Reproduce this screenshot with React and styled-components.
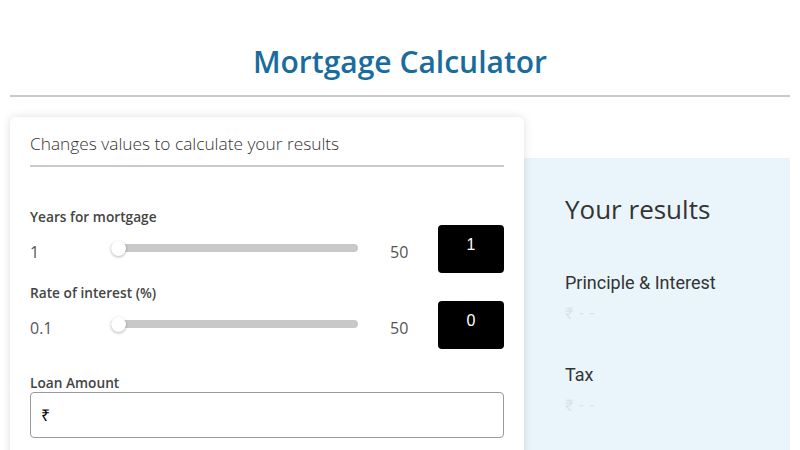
import React, { useState } from 'react';
import styled, { createGlobalStyle } from 'styled-components';

const GlobalStyle = createGlobalStyle`
body {
  margin: 0;
  background: #fff;
  font-family: "Open Sans", "Liberation Sans", sans-serif;
  overflow: hidden;
}
`

const Page = styled.div`
padding: 0 10px;
`
const Header = styled.div`
padding: 42px 0 13px;
border-bottom: 2px solid #cacaca;
text-align: center;
`
const Title = styled.h1`
margin: 0;
font-size: 30px;
line-height: 40px;
font-weight: 600;
color: #1a6c9c;
`
const Body = styled.div`
display: flex;
align-items: flex-start;
margin-top: 20px;
`
const Card = styled.div`
width: 514px;
box-sizing: border-box;
padding: 15px 20px 40px;
border-radius: 6px;
background: #fff;
box-shadow: 0 0 10px rgba(0, 0, 0, 0.13);
position: relative;
z-index: 1;
`
const Subtitle = styled.div`
font-size: 17.3px;
line-height: 24px;
font-weight: 300;
color: #333;
padding-bottom: 9px;
border-bottom: 2px solid #cacaca;
margin-bottom: 42px;
`
const Label = styled.div`
font-size: 13.7px;
line-height: 16px;
font-weight: 600;
color: #444;
margin-top: ${p => p.gap || 0}px;
margin-bottom: ${p => p.below || 0}px;
`
const SliderRow = styled.div`
display: grid;
grid-template-columns: 81px 247px 32px 48px 66px;
align-items: center;
height: 48px;
`
const RangeValue = styled.div`
font-size: 16px;
color: #555;
padding-top: 5px;
grid-column: ${p => p.col};
`
const Range = styled.input`
-webkit-appearance: none;
appearance: none;
width: 100%;
height: 8px;
margin: 0;
border-radius: 4px;
background: #c8c8c8;
outline: none;
margin-top: -2px;
&::-webkit-slider-thumb {
  -webkit-appearance: none;
  width: 15px;
  height: 15px;
  border-radius: 50%;
  background: #fff;
  box-shadow: 0 1px 3px rgba(0, 0, 0, 0.3);
  cursor: pointer;
}
`
const ValueBox = styled.input`
width: 66px;
height: 48px;
box-sizing: border-box;
border: none;
border-radius: 4px;
background: #000;
color: #fff;
text-align: center;
font-family: "Liberation Sans", Arial, sans-serif;
font-size: 16px;
padding: 0 0 8px;
outline: none;
`
const AmountInput = styled.input`
width: 100%;
height: 46px;
box-sizing: border-box;
border: 1px solid #9a9a9a;
border-radius: 4px;
padding: 0 10px;
font-family: "Liberation Sans", Arial, sans-serif;
font-size: 16px;
color: #000;
outline: none;
`
const Results = styled.div`
flex: 1;
margin-top: 41px;
min-height: 320px;
background: #e9f5fa;
padding: 34px 41px;
font-family: Roboto, "Liberation Sans", sans-serif;
`
const ResultsTitle = styled.div`
font-family: "Open Sans", "Liberation Sans", sans-serif;
font-size: 26px;
line-height: 34px;
color: #333;
margin-bottom: 45px;
`
const ResultItem = styled.div`
margin-bottom: 37px;
`
const ResultLabel = styled.div`
font-size: 18px;
line-height: 24px;
color: #333;
`
const ResultValue = styled.div`
font-size: 16px;
line-height: 24px;
margin-top: 7px;
color: #d6e4eb;
letter-spacing: 1px;
`

function SliderField({ label, min, max, step, value, onChange, gap }) {
  return (
    <>
      <Label gap={gap}>{label}</Label>
      <SliderRow>
        <RangeValue col={1}>{min}</RangeValue>
        <Range type="range" min={min} max={max} step={step} value={value || min}
          onChange={e => onChange(e.target.value)} />
        <RangeValue col={4}>{max}</RangeValue>
        <ValueBox value={value} onChange={e => onChange(e.target.value)} />
      </SliderRow>
    </>
  )
}

export default function App() {
  const [years, setYears] = useState(1);
  const [rate, setRate] = useState(0);
  const [amount, setAmount] = useState('₹');

  return (
    <Page>
      <GlobalStyle />
      <Header>
        <Title>Mortgage Calculator</Title>
      </Header>
      <Body>
        <Card>
          <Subtitle>Changes values to calculate your results</Subtitle>
          <SliderField label="Years for mortgage" min={1} max={50} step={1} value={years} onChange={setYears} />
          <SliderField label="Rate of interest (%)" min={0.1} max={50} step={0.1} value={rate} onChange={setRate} gap={12} />
          <Label gap={26} below={1}>Loan Amount</Label>
          <AmountInput value={amount} onChange={e => setAmount(e.target.value)} />
        </Card>
        <Results>
          <ResultsTitle>Your results</ResultsTitle>
          <ResultItem>
            <ResultLabel>Principle &amp; Interest</ResultLabel>
            <ResultValue>₹ - -</ResultValue>
          </ResultItem>
          <ResultItem>
            <ResultLabel>Tax</ResultLabel>
            <ResultValue>₹ - -</ResultValue>
          </ResultItem>
        </Results>
      </Body>
    </Page>
  );
}
